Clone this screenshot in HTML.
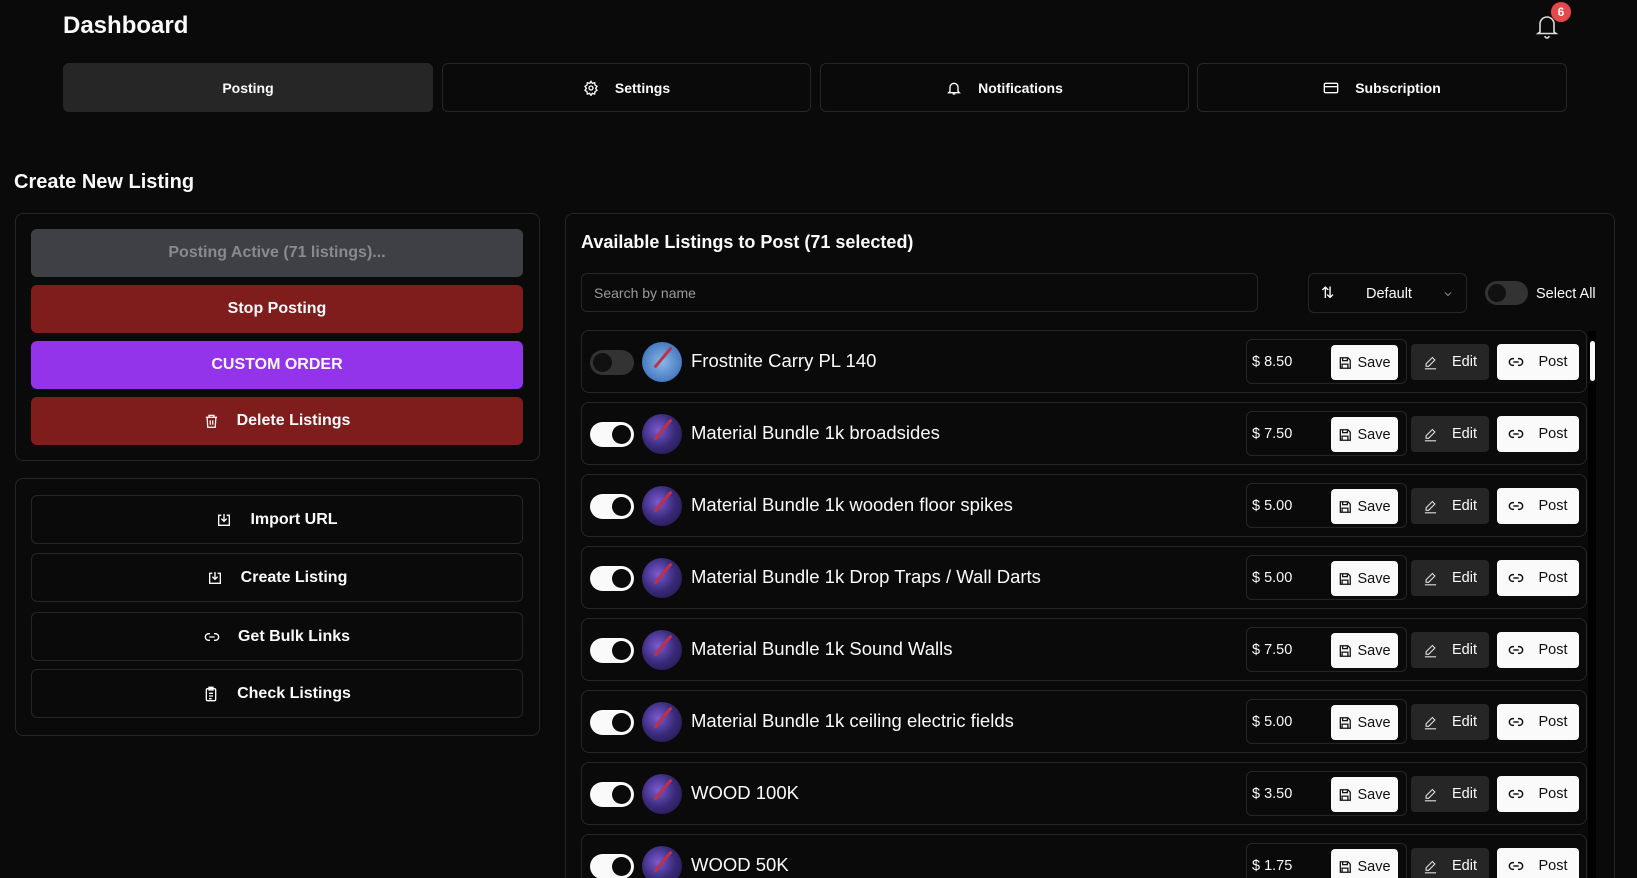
<!DOCTYPE html>
<html style="height:878px;overflow:hidden"><head><meta charset="utf-8"><style>
*{box-sizing:border-box;margin:0;padding:0}
body{width:1637px;height:878px;background:#0a0a0a;color:#fafafa;font-family:"Liberation Sans",sans-serif;overflow:hidden;position:relative}
#w{position:absolute;left:0;top:0;width:1637px;height:878px;overflow:hidden}
.a{position:absolute}
.tab{position:absolute;top:63px;height:49px;border:1px solid #262626;border-radius:6px;display:flex;align-items:center;justify-content:center;font-size:14px;font-weight:bold;gap:16px}
.card{position:absolute;border:1px solid #262626;border-radius:8px}
.btn{position:absolute;left:31px;width:492px;height:48px;border-radius:6px;display:flex;align-items:center;justify-content:center;font-size:16px;font-weight:bold;gap:18px}
.ob{border:1px solid #262626;height:49px}
.row{position:absolute;left:581px;width:1006px;height:63px;border:1px solid #262626;border-radius:8px}
.tg{position:absolute;left:8px;top:19px;width:44px;height:25px;border-radius:13px;background:#fafafa}
.tg::after{content:"";position:absolute;right:3px;top:3px;width:19px;height:19px;border-radius:50%;background:#0a0a0a}
.tg.off{background:#333}.tg.off::after{left:3px;right:auto;background:#111}
.av{position:absolute;left:60px;top:11px;width:40px;height:40px;border-radius:50%;background:radial-gradient(circle at 40% 40%,#7a5cd0,#3a2a7a 50%,#1a1440);overflow:hidden}
.av::after{content:"";position:absolute;left:8px;top:14px;width:26px;height:3px;background:#c0304a;transform:rotate(-50deg)}
.nm{position:absolute;left:109px;top:19px;font-size:18.5px}
.pb{position:absolute;left:664px;top:8px;width:161px;height:45px;border:1px solid #262626;border-radius:6px}
.pr{position:absolute;left:5px;top:14px;font-size:14.5px}
.sv{position:absolute;left:84px;top:5px;width:67px;height:35px;background:#fafafa;color:#111;border-radius:4px;font-size:14.5px;display:flex;align-items:center;justify-content:center;gap:5px}
.ed{position:absolute;left:829px;top:13px;width:78px;height:36px;background:#262626;border-radius:4px;font-size:14.5px;display:flex;align-items:center;justify-content:center;gap:14px}
.po{position:absolute;left:915px;top:13px;width:82px;height:36px;background:#fafafa;color:#111;border-radius:4px;font-size:14.5px;display:flex;align-items:center;justify-content:center;gap:14px}
svg{display:block}
</style></head><body><div id="w">
<svg width="0" height="0" style="position:absolute"><defs>
<symbol id="sv" viewBox="0 0 24 24"><path fill="none" stroke="#111" stroke-width="2.2" d="M4 3h13l4 4v14H4zM8 3v5h8V3M7 21v-7h10v7"/></symbol>
<symbol id="ed" viewBox="0 0 24 24"><path fill="none" stroke="#ddd" stroke-width="1.8" d="M15 4l4 4L9 18H5v-4zM3 22h18"/></symbol>
<symbol id="ln" viewBox="0 0 24 24"><path fill="none" stroke="#111" stroke-width="2.2" d="M9 17H7a5 5 0 010-10h2M15 7h2a5 5 0 010 10h-2M8 12h8"/></symbol>
</defs></svg>
<div class="a" style="left:63px;top:12px;font-size:24px;font-weight:bold">Dashboard</div>
<svg class="a" style="left:1535px;top:13px" width="24" height="26" viewBox="0 0 24 26" fill="none" stroke="#ddd" stroke-width="1.6"><path d="M5 19V11a7 7 0 0114 0v8l2 1.5H3z"/><path d="M10 23a2 2 0 004 0"/></svg>
<div class="a" style="left:1551px;top:2px;width:20px;height:20px;border-radius:50%;background:#e5484d;font-size:12px;font-weight:bold;display:flex;align-items:center;justify-content:center">6</div>

<div class="tab" style="left:63px;width:370px;background:#262626;border-color:#262626">Posting</div>
<div class="tab" style="left:442px;width:369px"><svg width="16" height="16" viewBox="0 0 24 24" fill="none" stroke="#fff" stroke-width="2"><circle cx="12" cy="12" r="3"/><path d="M12 2l2 3 3.5-1 .5 3.5 3 2-2 3 2 3-3 2-.5 3.5-3.5-1-2 3-2-3-3.5 1-.5-3.5-3-2 2-3-2-3 3-2 .5-3.5 3.5 1z"/></svg>Settings</div>
<div class="tab" style="left:820px;width:369px"><svg width="16" height="16" viewBox="0 0 24 24" fill="none" stroke="#fff" stroke-width="2"><path d="M6 17V11a6 6 0 0112 0v6l2 2H4z"/><path d="M10 21h4"/></svg>Notifications</div>
<div class="tab" style="left:1197px;width:370px"><svg width="16" height="16" viewBox="0 0 24 24" fill="none" stroke="#fff" stroke-width="2"><rect x="2" y="5" width="20" height="14" rx="2"/><path d="M2 10h20"/></svg>Subscription</div>

<div class="a" style="left:14px;top:171px;font-size:20px;font-weight:bold">Create New Listing</div>

<div class="card" style="left:15px;top:213px;width:525px;height:248px"></div>
<div class="btn" style="top:229px;background:#3f4046;color:#8a8a8e;font-weight:bold">Posting Active (71 listings)...</div>
<div class="btn" style="top:285px;background:#7f1d1d">Stop Posting</div>
<div class="btn" style="top:341px;background:#9333ea">CUSTOM ORDER</div>
<div class="btn" style="top:397px;background:#7f1d1d"><svg width="15" height="16" viewBox="0 0 24 24" fill="none" stroke="#fff" stroke-width="2"><path d="M3 6h18M8 6V3h8v3M5 6l1 16h12l1-16M10 11v7M14 11v7"/></svg>Delete Listings</div>

<div class="card" style="left:15px;top:478px;width:525px;height:258px"></div>
<div class="btn ob" style="top:495px"><svg width="16" height="16" viewBox="0 0 24 24" fill="none" stroke="#fff" stroke-width="2"><path d="M8 5H4v15h16V5h-4M12 3v11M8 10l4 4 4-4"/></svg>Import URL</div>
<div class="btn ob" style="top:553px"><svg width="16" height="16" viewBox="0 0 24 24" fill="none" stroke="#fff" stroke-width="2"><path d="M8 5H4v15h16V5h-4M12 3v11M8 10l4 4 4-4"/></svg>Create Listing</div>
<div class="btn ob" style="top:612px"><svg width="16" height="16" viewBox="0 0 24 24" fill="none" stroke="#fff" stroke-width="2"><path d="M9 17H7a5 5 0 010-10h2M15 7h2a5 5 0 010 10h-2M8 12h8"/></svg>Get Bulk Links</div>
<div class="btn ob" style="top:669px"><svg width="16" height="16" viewBox="0 0 24 24" fill="none" stroke="#fff" stroke-width="2"><rect x="5" y="4" width="14" height="18" rx="2"/><path d="M9 2h6v4H9zM9 11h6M9 15h6M9 19h4"/></svg>Check Listings</div>

<div class="card" style="left:565px;top:213px;width:1050px;height:680px"></div>
<div class="a" style="left:581px;top:232px;font-size:18px;font-weight:bold">Available Listings to Post (71 selected)</div>
<div class="a" style="left:581px;top:273px;width:677px;height:39px;border:1px solid #262626;border-radius:6px;color:#9a9a9a;font-size:14px;padding:11px 12px">Search by name</div>
<div class="a" style="left:1308px;top:273px;width:159px;height:40px;border:1px solid #262626;border-radius:6px;font-size:14.5px"><span class="a" style="left:12px;top:9px;font-size:16px">⇅</span><span class="a" style="left:57px;top:12px">Default</span><svg class="a" style="left:133px;top:14px" width="12" height="12" viewBox="0 0 24 24" fill="none" stroke="#888" stroke-width="2"><path d="M6 9l6 6 6-6"/></svg></div>
<div class="a" style="left:1485px;top:281px;width:43px;height:24px;border-radius:12px;background:#333"><div class="a" style="left:3px;top:3px;width:18px;height:18px;border-radius:50%;background:#111"></div></div>
<div class="a" style="left:1536px;top:286px;font-size:14.5px">Select All</div>
<div class="a" style="left:1588px;top:331px;width:8px;height:547px;background:#000"></div>
<div class="a" style="left:1590px;top:341px;width:5px;height:40px;background:#fafafa;border-radius:3px"></div>

<div class="row" style="top:330px"><div class="tg off"></div><div class="av" style="background:radial-gradient(circle,#8ab8e8,#2a60b0)"></div><div class="nm">Frostnite Carry PL 140</div><div class="pb"><div class="pr">$ 8.50</div><div class="sv"><svg width="14" height="14"><use href="#sv"/></svg>Save</div></div><div class="ed"><svg width="15" height="15"><use href="#ed"/></svg>Edit</div><div class="po"><svg width="16" height="16"><use href="#ln"/></svg>Post</div></div>
<div class="row" style="top:402px"><div class="tg"></div><div class="av"></div><div class="nm">Material Bundle 1k broadsides</div><div class="pb"><div class="pr">$ 7.50</div><div class="sv"><svg width="14" height="14"><use href="#sv"/></svg>Save</div></div><div class="ed"><svg width="15" height="15"><use href="#ed"/></svg>Edit</div><div class="po"><svg width="16" height="16"><use href="#ln"/></svg>Post</div></div>
<div class="row" style="top:474px"><div class="tg"></div><div class="av"></div><div class="nm">Material Bundle 1k wooden floor spikes</div><div class="pb"><div class="pr">$ 5.00</div><div class="sv"><svg width="14" height="14"><use href="#sv"/></svg>Save</div></div><div class="ed"><svg width="15" height="15"><use href="#ed"/></svg>Edit</div><div class="po"><svg width="16" height="16"><use href="#ln"/></svg>Post</div></div>
<div class="row" style="top:546px"><div class="tg"></div><div class="av"></div><div class="nm">Material Bundle 1k Drop Traps / Wall Darts</div><div class="pb"><div class="pr">$ 5.00</div><div class="sv"><svg width="14" height="14"><use href="#sv"/></svg>Save</div></div><div class="ed"><svg width="15" height="15"><use href="#ed"/></svg>Edit</div><div class="po"><svg width="16" height="16"><use href="#ln"/></svg>Post</div></div>
<div class="row" style="top:618px"><div class="tg"></div><div class="av"></div><div class="nm">Material Bundle 1k Sound Walls</div><div class="pb"><div class="pr">$ 7.50</div><div class="sv"><svg width="14" height="14"><use href="#sv"/></svg>Save</div></div><div class="ed"><svg width="15" height="15"><use href="#ed"/></svg>Edit</div><div class="po"><svg width="16" height="16"><use href="#ln"/></svg>Post</div></div>
<div class="row" style="top:690px"><div class="tg"></div><div class="av"></div><div class="nm">Material Bundle 1k ceiling electric fields</div><div class="pb"><div class="pr">$ 5.00</div><div class="sv"><svg width="14" height="14"><use href="#sv"/></svg>Save</div></div><div class="ed"><svg width="15" height="15"><use href="#ed"/></svg>Edit</div><div class="po"><svg width="16" height="16"><use href="#ln"/></svg>Post</div></div>
<div class="row" style="top:762px"><div class="tg"></div><div class="av"></div><div class="nm">WOOD 100K</div><div class="pb"><div class="pr">$ 3.50</div><div class="sv"><svg width="14" height="14"><use href="#sv"/></svg>Save</div></div><div class="ed"><svg width="15" height="15"><use href="#ed"/></svg>Edit</div><div class="po"><svg width="16" height="16"><use href="#ln"/></svg>Post</div></div>
<div class="row" style="top:834px"><div class="tg"></div><div class="av"></div><div class="nm">WOOD 50K</div><div class="pb"><div class="pr">$ 1.75</div><div class="sv"><svg width="14" height="14"><use href="#sv"/></svg>Save</div></div><div class="ed"><svg width="15" height="15"><use href="#ed"/></svg>Edit</div><div class="po"><svg width="16" height="16"><use href="#ln"/></svg>Post</div></div>
</div></body></html>
